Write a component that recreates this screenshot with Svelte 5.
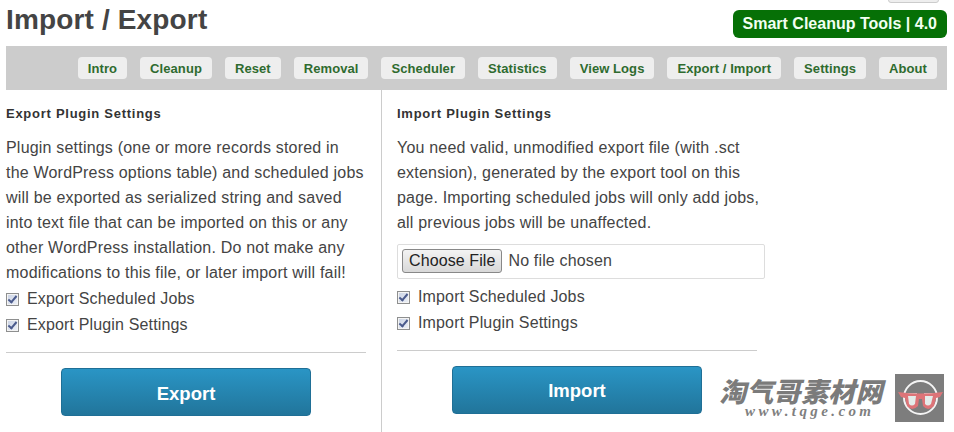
<script>
	const tabs = ['Intro', 'Cleanup', 'Reset', 'Removal', 'Scheduler', 'Statistics', 'View Logs', 'Export / Import', 'Settings', 'About'];
	const exportOptions = ['Export Scheduled Jobs', 'Export Plugin Settings'];
	const importOptions = ['Import Scheduled Jobs', 'Import Plugin Settings'];
</script>

<div class="page">
	<span class="help-tab"></span>
	<header class="top">
		<h1>Import / Export</h1>
		<div class="badge">Smart Cleanup Tools | 4.0</div>
	</header>

	<nav class="tabs">
		{#each tabs as tab}
			<a href="#{tab}" class="tab">{tab}</a>
		{/each}
	</nav>

	<div class="columns">
		<section class="col left">
			<h2>Export Plugin Settings</h2>
			<p>Plugin settings (one or more records stored in the WordPress options table) and scheduled jobs will be exported as serialized string and saved into text file that can be imported on this or any other WordPress installation. Do not make any modifications to this file, or later import will fail!</p>
			{#each exportOptions as option}
				<label class="check"><input type="checkbox" checked />{option}</label>
			{/each}
			<hr />
			<div class="actions"><button class="primary">Export</button></div>
		</section>

		<section class="col right">
			<h2>Import Plugin Settings</h2>
			<p>You need valid, unmodified export file (with .sct extension), generated by the export tool on this page. Importing scheduled jobs will only add jobs, all previous jobs will be unaffected.</p>
			<div class="file-box">
				<span class="file-button">Choose File</span>
				<span class="file-name">No file chosen</span>
			</div>
			{#each importOptions as option}
				<label class="check"><input type="checkbox" checked />{option}</label>
			{/each}
			<hr />
			<div class="actions"><button class="primary">Import</button></div>
		</section>
	</div>

	<!-- Watermark over the corner -->
	<div class="watermark">
		<div class="wm-text">
			<span class="wm-cn">淘气哥素材网</span>
			<span class="wm-url">www.tqge.com</span>
		</div>
		<div class="wm-logo">
			<svg width="49" height="48" viewBox="0 0 49 48">
				<circle cx="25.500" cy="23.500" r="16.500" fill="none" stroke="#f4f4f4" stroke-width="2" />
				<path d="M11 19 H22 V31 Q17 35 13 31 Z M29 19 H40 L38 31 Q33 35 29 31 Z" fill="#e4ecea" />
				<path d="M3 18 Q25 21 48 18 L45 23 L41 24 L39 32 Q33 38 28 32 L27 25 H24 L23 32 Q17 38 12 32 L10 24 L6 23 Z M13 22 L14 30 Q17 33 20 30 L21 22 Z M30 22 L30 30 Q33 33 36 30 L38 22 Z" fill="#dd7478" fill-rule="evenodd" />
			</svg>
		</div>
	</div>
</div>

<style>
	:global(body) {
		margin: 0;
		background: #fff;
	}

	.page {
		position: relative;
		width: 954px;
		height: 432px;
		overflow: hidden;
		font-family: 'Liberation Sans', Arial, sans-serif;
		color: #444;
		box-sizing: border-box;
		padding-left: 6px;
	}

	.help-tab {
		position: absolute;
		top: -20px;
		left: 888px;
		width: 49px;
		height: 21px;
		border: 1px solid #ccc;
		border-radius: 3px;
		background: #eee;
	}

	.top {
		display: flex;
		justify-content: space-between;
		width: 941px;
		height: 46px;
	}

	h1 {
		margin: 3px 0 0;
		font-size: 28px;
		line-height: 34px;
		font-weight: bold;
		letter-spacing: 0.15px;
		color: #444;
	}

	.badge {
		margin-top: 10px;
		height: 28px;
		box-sizing: border-box;
		padding: 0 10px;
		background: #067006;
		border-radius: 6px;
		color: #f2fff2;
		font-size: 16px;
		font-weight: bold;
		line-height: 27px;
	}

	.tabs {
		display: flex;
		justify-content: flex-end;
		gap: 13px;
		width: 941px;
		height: 44px;
		box-sizing: border-box;
		padding: 11px 10px 0 0;
		background: #ccc;
	}

	.tab {
		height: 22px;
		box-sizing: border-box;
		padding: 0 10px;
		background: #eee;
		border-radius: 4px;
		color: #2f6b2f;
		font-size: 13px;
		font-weight: bold;
		line-height: 23px;
		letter-spacing: 0.08px;
		text-decoration: none;
	}

	.columns {
		display: flex;
		margin-left: -6px;
		height: 342px;
	}

	.col {
		box-sizing: border-box;
	}

	.left {
		width: 382px;
		padding: 0 15px 0 6px;
		border-right: 1px solid #ccc;
	}

	.right {
		width: 400px;
		padding: 0 0 0 15px;
	}

	h2 {
		margin: 16px 0 0;
		font-size: 13px;
		line-height: 15px;
		font-weight: bold;
		letter-spacing: 0.73px;
		color: #333;
	}

	p {
		margin: 14px 0 0;
		font-size: 16px;
		line-height: 25px;
		letter-spacing: 0.2px;
		color: #444;
	}

	.right p {
		width: 368px;
	}

	.check {
		display: flex;
		align-items: center;
		height: 26px;
		font-size: 16px;
		letter-spacing: 0.15px;
		white-space: pre;
	}

	.check input {
		appearance: none;
		position: relative;
		width: 13px;
		height: 13px;
		margin: 0 8px 0 0;
		border: 1px solid #8e8f8f;
		background: linear-gradient(135deg, #c9d2e4, #eef1f7);
		box-shadow: inset 0 0 0 1px #f4f4f4;
	}

	.check input::after {
		content: '';
		position: absolute;
		left: 3px;
		top: 0;
		width: 3px;
		height: 7px;
		border: solid #4a5a8c;
		border-width: 0 2px 2px 0;
		transform: rotate(40deg);
	}

	.left p + .check {
		margin-top: 1px;
	}

	hr {
		height: 1px;
		margin: 14px 0 15px;
		border: none;
		background: #ccc;
	}

	.right hr {
		width: 360px;
	}

	.actions {
		display: flex;
		justify-content: center;
	}

	.right .actions {
		width: 360px;
	}

	.primary {
		width: 250px;
		height: 48px;
		padding: 3px 0 0;
		border: 1px solid #1f6f96;
		border-radius: 4px;
		background: linear-gradient(#2a95c5, #21759b);
		color: #fff;
		font-family: inherit;
		font-size: 18.5px;
		font-weight: bold;
	}

	.right .primary {
		padding-top: 1px;
	}

	.file-box {
		display: flex;
		align-items: center;
		gap: 6px;
		width: 368px;
		height: 35px;
		box-sizing: border-box;
		margin-top: 9px;
		padding: 0 4px 1px;
		border: 1px solid #ddd;
		border-radius: 2px;
	}

	.file-button {
		box-sizing: border-box;
		height: 24px;
		padding: 0 6px;
		border: 1px solid #888;
		border-radius: 3px;
		background: linear-gradient(#f3f3f3, #d8d8d8);
		color: #222;
		font-size: 16px;
		line-height: 22px;
		letter-spacing: 0.1px;
	}

	.file-name {
		font-size: 16px;
		letter-spacing: 0.15px;
		color: #444;
	}

	.file-box + .check {
		margin-top: 5px;
	}

	.watermark {
		position: absolute;
		left: 718px;
		top: 374px;
		display: flex;
		gap: 5px;
	}

	.wm-text {
		display: flex;
		flex-direction: column;
		width: 172px;
		padding-top: 3px;
	}

	.wm-cn {
		margin-left: 1px;
		font-family: 'Noto Sans CJK SC', sans-serif;
		font-size: 27px;
		line-height: 27px;
		font-weight: 900;
		font-style: italic;
		letter-spacing: 0.3px;
		color: #7b7b7b;
		white-space: nowrap;
	}

	.wm-url {
		margin-left: 27px;
		font-family: 'Liberation Serif', serif;
		font-size: 15px;
		line-height: 15px;
		font-weight: bold;
		font-style: italic;
		letter-spacing: 3.4px;
		color: #808080;
		white-space: nowrap;
	}

	.wm-logo {
		width: 49px;
		height: 48px;
		background: #7d7d7d;
	}
</style>
